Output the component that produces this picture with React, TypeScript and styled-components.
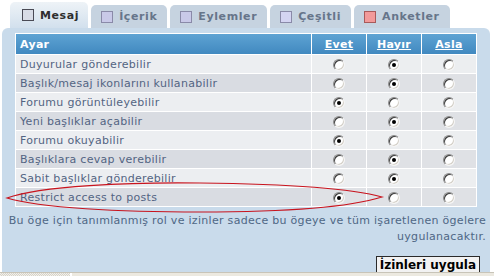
import styled, { createGlobalStyle } from 'styled-components'

const GlobalStyle = createGlobalStyle`
  body {
    margin: 0;
    background: #fff;
    font-family: "DejaVu Sans", Verdana, sans-serif;
  }
`

type Choice = 'evet' | 'hayir' | 'asla'

const permissions: { label: string, value: Choice }[] = [
  { label: 'Duyurular gönderebilir', value: 'hayir' },
  { label: 'Başlık/mesaj ikonlarını kullanabilir', value: 'hayir' },
  { label: 'Forumu görüntüleyebilir', value: 'evet' },
  { label: 'Yeni başlıklar açabilir', value: 'hayir' },
  { label: 'Forumu okuyabilir', value: 'evet' },
  { label: 'Başlıklara cevap verebilir', value: 'hayir' },
  { label: 'Sabit başlıklar gönderebilir', value: 'hayir' },
  { label: 'Restrict access to posts', value: 'evet' }
]

const tabs = [
  { name: 'Mesaj', fill: '#d8dce6', border: '#4a4a55', active: true },
  { name: 'İçerik', fill: '#c9c9e8', border: '#8a8aa8' },
  { name: 'Eylemler', fill: '#c9c9e8', border: '#8a8aa8' },
  { name: 'Çeşitli', fill: '#d4d4f2', border: '#8a8aa8' },
  { name: 'Anketler', fill: '#f29a9a', border: '#a85a5a' }
]

const Page = styled.div`
  position: relative;
  width: 494px;
  height: 276px;
  overflow: hidden;
  display: flex;
  flex-direction: column;
`

const TabBar = styled.ul`
  display: flex;
  align-items: flex-end;
  gap: 3px;
  height: 26px;
  margin: 0;
  padding: 2px 0 0 10px;
  list-style: none;
`

const Tab = styled.li<{ $active?: boolean }>`
  display: flex;
  align-items: center;
  gap: 6px;
  height: ${({ $active }) => ($active ? 26 : 23)}px;
  padding: ${({ $active }) => ($active ? '0 9px 0 12px' : '0 10px')};
  border-radius: 5px 5px 0 0;
  background: ${({ $active }) => ($active ? 'linear-gradient(#eef3f7, #d2e0ed)' : '#c6d3e0')};
  color: ${({ $active }) => ($active ? '#2e2e2e' : '#66758a')};
  font-size: 11px;
  font-weight: bold;
  letter-spacing: 0.6px;
`

const TabIcon = styled.span<{ $fill: string, $border: string }>`
  width: 10px;
  height: 10px;
  border: 1px solid ${({ $border }) => $border};
  background: ${({ $fill }) => $fill};
`

const Panel = styled.section`
  flex: 1;
  min-height: 0;
  overflow: hidden;
  display: flex;
  flex-direction: column;
  margin: 0 4px 0 2px;
  padding: 5px 4px 0 6px;
  background: #c9dbeb;
  border-radius: 6px 6px 0 0;
`

const Table = styled.table`
  flex-shrink: 0;
  margin: 0 9px 0 7px;
  border-spacing: 1px;
  background: #fff;
  font-size: 11px;
  letter-spacing: 0.3px;
  color: #536482;
`

const HeadCell = styled.th<{ $center?: boolean }>`
  height: 20px;
  padding: 0 4px;
  background: linear-gradient(#5ea3d3, #4189c0);
  color: #fff;
  font-weight: bold;
  text-align: ${({ $center }) => ($center ? 'center' : 'left')};
  width: ${({ $center }) => ($center ? '46px' : 'auto')};

  a {
    color: #fff;
    text-decoration: underline;
  }
`

const LabelCell = styled.td<{ $alt: boolean }>`
  height: 18px;
  padding: 0 4px;
  background: ${({ $alt }) => ($alt ? '#d9dce2' : '#eceef1')};
  white-space: nowrap;
`

const RadioCell = styled.td<{ $alt: boolean }>`
  height: 18px;
  padding: 0;
  text-align: center;
  background: ${({ $alt }) => ($alt ? '#dfe1e5' : '#eceef0')};
`

const Radio = styled.span<{ $checked: boolean }>`
  position: relative;
  display: inline-block;
  vertical-align: middle;
  width: 10px;
  height: 10px;
  border-radius: 50%;
  border: 1px solid;
  border-color: #8a8a8a #f4f4f4 #f4f4f4 #8a8a8a;
  box-shadow: inset 1px 1px 0 #3c3c3c, inset -1px -1px 0 #d4d0c8;
  background: #fff;

  &::after {
    content: '';
    display: ${({ $checked }) => ($checked ? 'block' : 'none')};
    position: absolute;
    left: 3px;
    top: 3px;
    width: 4px;
    height: 4px;
    border-radius: 50%;
    background: #000;
  }
`

const Note = styled.p`
  flex-shrink: 0;
  margin: 6px 0 0;
  font-size: 11px;
  letter-spacing: 0.3px;
  line-height: 16px;
  text-align: right;
  color: #4f6785;
`

const Actions = styled.div`
  flex-shrink: 0;
  display: flex;
  justify-content: flex-end;
  margin-top: 11px;
  padding-right: 6px;
`

const Button = styled.button`
  font-family: "DejaVu Sans", Verdana, sans-serif;
  font-size: 12px;
  line-height: 14px;
  font-weight: bold;
  color: #000;
  padding: 0 3px;
  height: 18px;
  border: 1px solid #2a2a2a;
  border-radius: 0;
  background: #f2f2f2;
`

const StatusBar = styled.div`
  display: flex;
  height: 3px;
  border-top: 1px solid #c8c4b8;
`

const Grip = styled.div`
  width: 70px;
  background: repeating-conic-gradient(#d6d3ca 0 25%, #f2f0ea 0 50%) 0 0 / 2px 2px;
`

const StatusFill = styled.div`
  flex: 1;
  margin-left: 2px;
  background: #ece9e0;
`

const Annotation = styled.svg`
  position: absolute;
  left: 0;
  top: 0;
  pointer-events: none;
`

export default function App () {
  return (
    <Page>
      <GlobalStyle />
      <TabBar>
        {tabs.map(tab => (
          <Tab key={tab.name} $active={tab.active}>
            <TabIcon $fill={tab.fill} $border={tab.border} />
            {tab.name}
          </Tab>
        ))}
      </TabBar>

      <Panel>
        <Table>
          <thead>
            <tr>
              <HeadCell>Ayar</HeadCell>
              <HeadCell $center><a>Evet</a></HeadCell>
              <HeadCell $center><a>Hayır</a></HeadCell>
              <HeadCell $center><a>Asla</a></HeadCell>
            </tr>
          </thead>
          <tbody>
            {permissions.map((row, i) => (
              <tr key={row.label}>
                <LabelCell $alt={i % 2 === 1}>{row.label}</LabelCell>
                {(['evet', 'hayir', 'asla'] as Choice[]).map(choice => (
                  <RadioCell key={choice} $alt={i % 2 === 1}>
                    <Radio $checked={row.value === choice} />
                  </RadioCell>
                ))}
              </tr>
            ))}
          </tbody>
        </Table>

        <Note>
          Bu öge için tanımlanmış rol ve izinler sadece bu ögeye ve tüm işaretlenen ögelere uygulanacaktır.
        </Note>

        <Actions>
          <Button>İzinleri uygula</Button>
        </Actions>
      </Panel>

      <StatusBar>
        <Grip />
        <StatusFill />
      </StatusBar>

      <Annotation width='494' height='276'>
        <path
          d='M7 198 C 40 186, 130 182, 200 183 C 290 184, 350 188, 382 197 C 350 207, 290 212, 200 212 C 120 212, 40 208, 7 198 Z'
          fill='none'
          stroke='#c8141e'
          strokeWidth='1.2'
        />
      </Annotation>
    </Page>
  )
}
